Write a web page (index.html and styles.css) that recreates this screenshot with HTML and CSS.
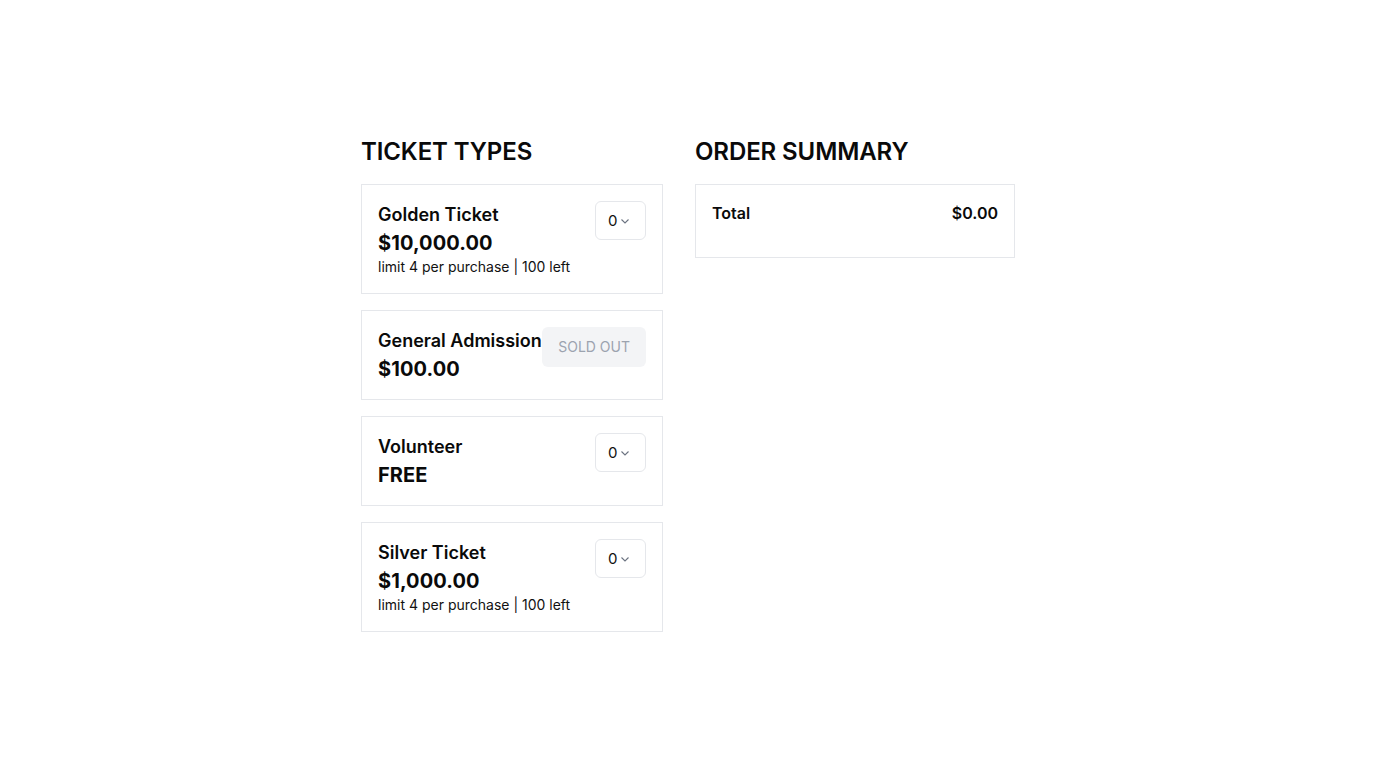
FILE: index.html
```html
<!DOCTYPE html>
<html>
<head>
<meta charset="utf-8">
<link rel="stylesheet" href="styles.css">
</head>
<body>
<div class="page">
  <section class="col tickets">
    <h2 class="heading">TICKET TYPES</h2>
    <div class="list">
      <div class="card">
        <div class="info">
          <div class="name">Golden Ticket</div>
          <div class="price">$10,000.00</div>
          <div class="meta">limit 4 per purchase | 100 left</div>
        </div>
        <div class="select"><span>0</span><svg width="10" height="10" viewBox="0 0 10 10"><path d="M1.5 3.5 L5 7 L8.5 3.5" fill="none" stroke="#6b7280" stroke-width="1.1"/></svg></div>
      </div>
      <div class="card">
        <div class="info">
          <div class="name">General Admission</div>
          <div class="price">$100.00</div>
        </div>
        <div class="soldout">SOLD OUT</div>
      </div>
      <div class="card">
        <div class="info">
          <div class="name">Volunteer</div>
          <div class="price">FREE</div>
        </div>
        <div class="select"><span>0</span><svg width="10" height="10" viewBox="0 0 10 10"><path d="M1.5 3.5 L5 7 L8.5 3.5" fill="none" stroke="#6b7280" stroke-width="1.1"/></svg></div>
      </div>
      <div class="card">
        <div class="info">
          <div class="name">Silver Ticket</div>
          <div class="price">$1,000.00</div>
          <div class="meta">limit 4 per purchase | 100 left</div>
        </div>
        <div class="select"><span>0</span><svg width="10" height="10" viewBox="0 0 10 10"><path d="M1.5 3.5 L5 7 L8.5 3.5" fill="none" stroke="#6b7280" stroke-width="1.1"/></svg></div>
      </div>
    </div>
  </section>
  <section class="col summary">
    <h2 class="heading">ORDER SUMMARY</h2>
    <div class="card summary-card">
      <div class="total-row">
        <span>Total</span>
        <span>$0.00</span>
      </div>
    </div>
  </section>
</div>
</body>
</html>
```
FILE: styles.css
```css
* { box-sizing: border-box; }
html, body { margin: 0; padding: 0; background: #fff; }
body {
  font-family: Inter, "Noto Sans", sans-serif;
  color: #0a0a0a;
}
.page {
  display: flex;
  justify-content: center;
  align-items: flex-start;
  gap: 32px;
  padding-top: 136px;
}
.col.tickets { width: 302px; }
.col.summary { width: 320px; }
.heading {
  margin: 0 0 16px;
  font-size: 24px;
  line-height: 32px;
  font-weight: 600;
  letter-spacing: -0.1px;
}
.list {
  display: flex;
  flex-direction: column;
  gap: 16px;
}
.card {
  border: 1px solid #e5e7eb;
  padding: 16px;
  display: flex;
  justify-content: space-between;
  align-items: flex-start;
}
.name {
  font-size: 18px;
  line-height: 28px;
  font-weight: 600;
  white-space: nowrap;
}
.price {
  font-size: 20px;
  line-height: 28px;
  font-weight: 700;
  letter-spacing: 0.1px;
}
.meta {
  font-size: 14px;
  line-height: 20px;
  color: #111;
}
.select {
  width: 51px;
  height: 39px;
  border: 1px solid #e5e7eb;
  border-radius: 6px;
  display: flex;
  align-items: center;
  padding-left: 12px;
  gap: 3px;
  font-size: 15px;
  color: #111;
}
.select svg { margin-top: 1px; }
.soldout {
  height: 40px;
  padding: 0 16px;
  background: #f3f4f6;
  border-radius: 6px;
  color: #9ca3af;
  font-size: 14px;
  line-height: 38px;
  display: flex;
  align-items: center;
  white-space: nowrap;
}
.summary-card {
  display: block;
  padding: 16px 16px 32px;
}
.total-row {
  display: flex;
  justify-content: space-between;
  font-size: 16px;
  line-height: 24px;
  font-weight: 600;
}
```
